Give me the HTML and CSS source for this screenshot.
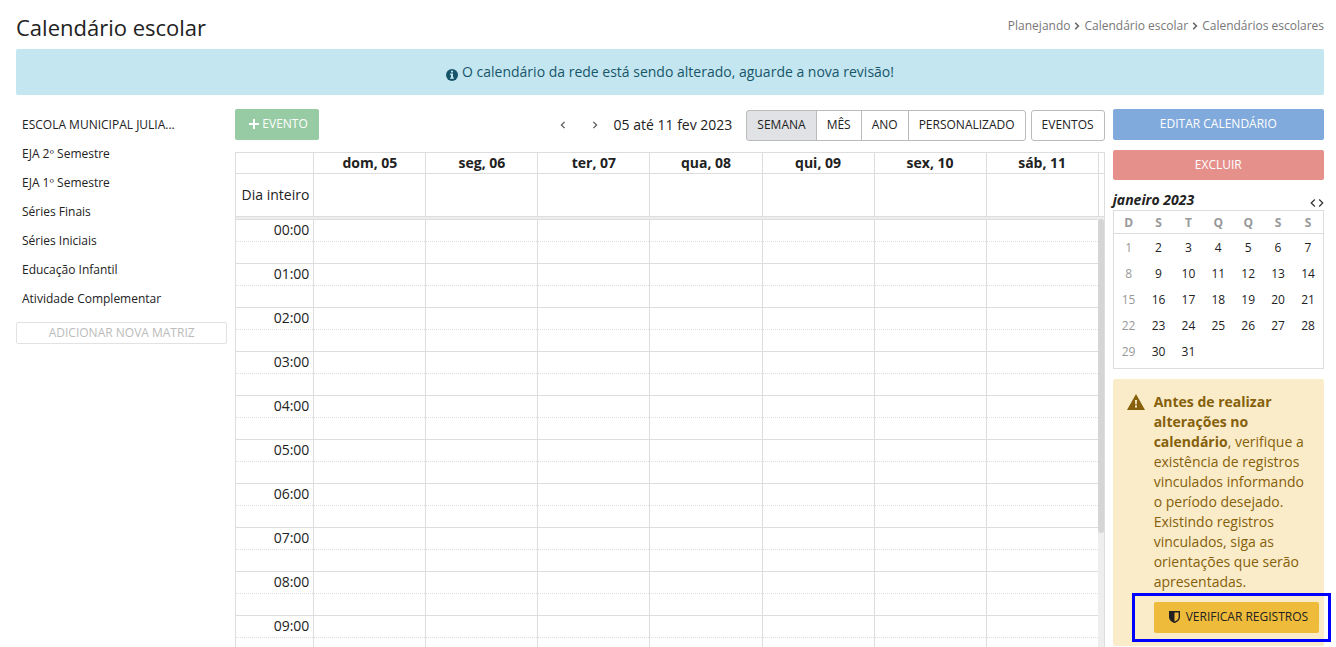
FILE: index.html
```html
<!DOCTYPE html>
<html lang="pt-BR">
<head>
<meta charset="utf-8">
<meta name="viewport" content="width=device-width, initial-scale=1">
<title>Calendário escolar</title>
<link rel="stylesheet" href="styles.css">
</head>
<body>
<div class="page">
  <header class="page-header">
    <h1 class="page-title">Calendário escolar</h1>
    <nav class="breadcrumb" aria-label="Navegação">
      <a href="#">Planejando</a>
      <svg class="crumb-sep" viewBox="0 0 6 8" aria-hidden="true"><path d="M1.2 .8 4.4 4 1.2 7.2"/></svg>
      <a href="#">Calendário escolar</a>
      <svg class="crumb-sep" viewBox="0 0 6 8" aria-hidden="true"><path d="M1.2 .8 4.4 4 1.2 7.2"/></svg>
      <a href="#">Calendários escolares</a>
    </nav>
  </header>

  <div class="notice" role="status">
    <svg class="notice-icon" viewBox="0 0 12 12" aria-hidden="true"><circle cx="6" cy="6" r="6" fill="#17566a"/><path d="M5 1.8h2v1.7H5zM4.2 4.6H7v3.8h.9v1.3H4.1V8.4H5V5.9h-.8z" fill="#c4e6f0"/></svg>
    <span>O calendário da rede está sendo alterado, aguarde a nova revisão!</span>
  </div>

  <main class="layout">
    <aside class="side">
      <ul class="school-list">
        <li><a href="#">ESCOLA MUNICIPAL JULIA...</a></li>
        <li><a href="#">EJA 2º Semestre</a></li>
        <li><a href="#">EJA 1º Semestre</a></li>
        <li><a href="#">Séries Finais</a></li>
        <li><a href="#">Séries Iniciais</a></li>
        <li><a href="#">Educação Infantil</a></li>
        <li><a href="#">Atividade Complementar</a></li>
      </ul>
      <button class="btn-add" type="button" disabled>ADICIONAR NOVA MATRIZ</button>
    </aside>

    <section class="schedule">
      <div class="toolbar">
        <button class="btn btn-green" type="button"><svg class="plus" viewBox="0 0 10 10" aria-hidden="true"><path d="M5 0v10M0 5h10"/></svg>EVENTO</button>
        <div class="period">
          <button class="arrow" type="button" aria-label="Anterior"><svg viewBox="0 0 6 8" aria-hidden="true"><path d="M4.6 .8 1.4 4l3.2 3.2"/></svg></button>
          <button class="arrow" type="button" aria-label="Próximo"><svg viewBox="0 0 6 8" aria-hidden="true"><path d="M1.4 .8 4.6 4 1.4 7.2"/></svg></button>
          <h2 class="period-title">05 até 11 fev 2023</h2>
        </div>
        <div class="views">
          <div class="view-group">
            <button class="view active" type="button">SEMANA</button>
            <button class="view" type="button">MÊS</button>
            <button class="view" type="button">ANO</button>
            <button class="view" type="button">PERSONALIZADO</button>
          </div>
          <button class="view single" type="button">EVENTOS</button>
        </div>
      </div>

      <div class="week">
        <table class="week-table">
          <colgroup><col class="col-axis"><col span="7"><col class="col-gutter"></colgroup>
          <thead>
            <tr><th></th><th>dom, 05</th><th>seg, 06</th><th>ter, 07</th><th>qua, 08</th><th>qui, 09</th><th>sex, 10</th><th>sáb, 11</th><th></th></tr>
          </thead>
          <tbody>
            <tr class="all-day"><td>Dia inteiro</td><td></td><td></td><td></td><td></td><td></td><td></td><td></td><td></td></tr>
          </tbody>
        </table>
        <div class="divider"></div>
        <div class="scroller">
          <table class="week-table slots">
            <colgroup><col class="col-axis"><col span="7"></colgroup>
            <tbody>
              <tr><td>00:00</td><td></td><td></td><td></td><td></td><td></td><td></td><td></td></tr>
              <tr class="half"><td></td><td></td><td></td><td></td><td></td><td></td><td></td><td></td></tr>
              <tr><td>01:00</td><td></td><td></td><td></td><td></td><td></td><td></td><td></td></tr>
              <tr class="half"><td></td><td></td><td></td><td></td><td></td><td></td><td></td><td></td></tr>
              <tr><td>02:00</td><td></td><td></td><td></td><td></td><td></td><td></td><td></td></tr>
              <tr class="half"><td></td><td></td><td></td><td></td><td></td><td></td><td></td><td></td></tr>
              <tr><td>03:00</td><td></td><td></td><td></td><td></td><td></td><td></td><td></td></tr>
              <tr class="half"><td></td><td></td><td></td><td></td><td></td><td></td><td></td><td></td></tr>
              <tr><td>04:00</td><td></td><td></td><td></td><td></td><td></td><td></td><td></td></tr>
              <tr class="half"><td></td><td></td><td></td><td></td><td></td><td></td><td></td><td></td></tr>
              <tr><td>05:00</td><td></td><td></td><td></td><td></td><td></td><td></td><td></td></tr>
              <tr class="half"><td></td><td></td><td></td><td></td><td></td><td></td><td></td><td></td></tr>
              <tr><td>06:00</td><td></td><td></td><td></td><td></td><td></td><td></td><td></td></tr>
              <tr class="half"><td></td><td></td><td></td><td></td><td></td><td></td><td></td><td></td></tr>
              <tr><td>07:00</td><td></td><td></td><td></td><td></td><td></td><td></td><td></td></tr>
              <tr class="half"><td></td><td></td><td></td><td></td><td></td><td></td><td></td><td></td></tr>
              <tr><td>08:00</td><td></td><td></td><td></td><td></td><td></td><td></td><td></td></tr>
              <tr class="half"><td></td><td></td><td></td><td></td><td></td><td></td><td></td><td></td></tr>
              <tr><td>09:00</td><td></td><td></td><td></td><td></td><td></td><td></td><td></td></tr>
              <tr class="half"><td></td><td></td><td></td><td></td><td></td><td></td><td></td><td></td></tr>
            </tbody>
          </table>
          <div class="track"><div class="thumb"></div></div>
        </div>
      </div>
    </section>

    <aside class="actions">
      <button class="btn btn-blue" type="button">EDITAR CALENDÁRIO</button>
      <button class="btn btn-red" type="button">EXCLUIR</button>

      <section class="mini">
        <div class="mini-head">
          <h3 class="mini-title">janeiro 2023</h3>
          <div class="mini-nav">
            <button class="arrow-mini" type="button" aria-label="Mês anterior"><svg viewBox="0 0 6 8" aria-hidden="true"><path d="M4.800 .5 1.200 4l3.600 3.500"/></svg></button>
            <button class="arrow-mini" type="button" aria-label="Próximo mês"><svg viewBox="0 0 6 8" aria-hidden="true"><path d="M1.200 .5 4.800 4 1.200 7.500"/></svg></button>
          </div>
        </div>
        <div class="mini-box">
          <table class="mini-table">
            <thead><tr><th>D</th><th>S</th><th>T</th><th>Q</th><th>Q</th><th>S</th><th>S</th></tr></thead>
            <tbody>
              <tr><td>1</td><td>2</td><td>3</td><td>4</td><td>5</td><td>6</td><td>7</td></tr>
              <tr><td>8</td><td>9</td><td>10</td><td>11</td><td>12</td><td>13</td><td>14</td></tr>
              <tr><td>15</td><td>16</td><td>17</td><td>18</td><td>19</td><td>20</td><td>21</td></tr>
              <tr><td>22</td><td>23</td><td>24</td><td>25</td><td>26</td><td>27</td><td>28</td></tr>
              <tr><td>29</td><td>30</td><td>31</td><td></td><td></td><td></td><td></td></tr>
            </tbody>
          </table>
        </div>
      </section>

      <section class="warning">
        <svg class="warning-icon" viewBox="0 0 18 16" aria-hidden="true"><path d="M9 0 18 16H0z" fill="#86600b"/><path d="M8 6h2l-.3 4.5H8.3zM8 11.5h2v2H8z" fill="#faecc9"/></svg>
        <div class="warning-body">
          <p><strong>Antes de realizar alterações no calendário</strong>, verifique a existência de registros vinculados informando o período desejado. Existindo registros vinculados, siga as orientações que serão apresentadas.</p>
          <div class="verify">
            <button class="btn btn-yellow" type="button"><svg class="shield" viewBox="0 0 11 12" aria-hidden="true"><path d="M.7.7h9.6v5.2c0 2.400-2.200 4.300-4.800 5.500C2.900 10.200.7 8.300.7 5.900z" fill="none" stroke="#222" stroke-width="1.400"/><path d="M.7.7h4.800v10.700C2.900 10.200.7 8.300.7 5.900z" fill="#222"/></svg>VERIFICAR REGISTROS</button>
            <span class="highlight"></span>
          </div>
        </div>
      </section>
    </aside>
  </main>
</div>
</body>
</html>
```
FILE: styles.css
```css
* { box-sizing: border-box; }

body {
  margin: 0;
  background: #fff;
  color: #222;
  font-family: "Open Sans", "Noto Sans", sans-serif;
  font-size: 14px;
  line-height: 20px;
}

h1, h2, h3, p, ul { margin: 0; padding: 0; }
a { color: inherit; text-decoration: none; }
button { font: inherit; color: inherit; cursor: pointer; }
table { border-spacing: 0; table-layout: fixed; width: 100%; }

.page {
  display: flex;
  flex-direction: column;
  height: 100vh;
  padding: 0 12px 0 16px;
  overflow: hidden;
}

.page-header {
  display: flex;
  flex: none;
  align-items: center;
  justify-content: space-between;
  height: 49px;
  padding-top: 4px;
}
.page-title { font-size: 22px; font-weight: 400; line-height: 30px; }
.breadcrumb { display: flex; align-items: center; gap: 4px; padding-bottom: 2px; font-size: 12px; color: #777; }
.crumb-sep { width: 6px; height: 8px; fill: none; stroke: #666; stroke-width: 1.6; }

.notice {
  display: flex;
  flex: none;
  align-items: center;
  justify-content: center;
  gap: 4px;
  height: 46px;
  border-radius: 2px;
  background: #c4e6f0;
  color: #17566a;
}
.notice-icon { width: 12px; height: 12px; margin-top: 5px; }

.layout {
  display: grid;
  flex: 1;
  grid-template-columns: repeat(12, minmax(0, 1fr));
  gap: 8px;
  min-height: 0;
  padding-top: 14px;
}
.side, .actions { grid-column: span 2; }
.schedule { display: flex; flex-direction: column; grid-column: span 8; min-height: 0; }

.school-list { padding: 1px 0 9px; list-style: none; font-size: 12px; }
.school-list a { display: block; padding: 0 6px; line-height: 29px; }
.btn-add {
  display: block;
  width: 100%;
  height: 22px;
  padding: 0;
  border: 1px solid #e2e2e5;
  border-radius: 2px;
  background: #fff;
  color: #bbb;
  font-size: 12px;
  line-height: 20px;
}

.btn {
  display: flex;
  align-items: center;
  justify-content: center;
  height: 31px;
  padding: 0 12px 2px;
  border: 0;
  border-radius: 2px;
  color: #fff;
  font-size: 12px;
  white-space: nowrap;
}
.btn-green { gap: 3px; padding: 0 11px 2px 14px; background: #97cba4; }
.btn-blue { width: 100%; background: #80aadc; }
.btn-red { width: 100%; height: 30px; margin-top: 10px; padding-bottom: 0; background: #e6908c; }
.btn-yellow { gap: 6px; padding: 0 11px 2px 15px; background: #efbb3b; color: #222; }
.plus { width: 10px; height: 10px; stroke: #fff; stroke-width: 2; }
.shield { width: 11px; height: 12px; }

.toolbar { display: flex; flex: none; align-items: flex-start; height: 43px; }
.period { display: flex; align-items: center; height: 31px; margin-left: auto; }
.arrow { display: flex; justify-content: center; width: 32px; padding: 0; border: 0; background: none; }
.arrow svg { width: 6px; height: 8px; fill: none; stroke: #555; stroke-width: 1.2; }
.period-title { padding: 0 14px 0 3px; font-size: 14px; font-weight: 400; }

.views { display: flex; gap: 5px; padding-top: 1px; }
.view-group { display: flex; }
.view {
  height: 31px;
  margin-left: -1px;
  padding: 0 10px 2px;
  border: 1px solid #bbb;
  background: #fff;
  font-size: 12px;
}
.view:first-child { margin-left: 0; border-radius: 3px 0 0 3px; }
.view:last-child { border-radius: 0 3px 3px 0; }
.view.active { background: #e1e2e6; }
.view.single { margin-left: 0; border-radius: 3px; }

.week {
  display: flex;
  flex: 1;
  flex-direction: column;
  min-height: 0;
  border: 1px solid #ddd;
  border-bottom: 0;
}
.col-axis { width: 77px; }
.col-gutter { width: 6px; }
.week-table th, .week-table td { padding: 0; border-left: 1px solid #ddd; }
.week-table th:first-child { border-left: 0; }
.week-table td:first-child { padding-right: 4px; border-left: 0; text-align: right; }
.week-table th { height: 20px; font-weight: 700; }
.all-day td { height: 43px; border-top: 1px solid #ddd; }
.divider { flex: none; height: 3px; border-top: 1px solid #ddd; background: #eee; }
.scroller { display: flex; flex: 1; min-height: 0; overflow: hidden; }
.slots { flex: 1; align-self: flex-start; }
.slots td { height: 22px; border-top: 1px solid #ddd; line-height: 20px; vertical-align: top; }
.slots .half td { border-top-style: dotted; }
.track { flex: none; width: 6px; background: #eee; }
.thumb { height: 314px; border-radius: 3px; background: #d5d5d5; }

.mini { padding-top: 10px; }
.mini-head { display: flex; align-items: center; justify-content: space-between; height: 20px; }
.mini-title { font-size: 14px; font-style: italic; font-weight: 700; line-height: 20px; }
.mini-nav { display: flex; gap: 2px; padding-top: 5px; }
.arrow-mini { display: flex; padding: 0; border: 0; background: none; }
.arrow-mini svg { width: 6px; height: 8px; fill: none; stroke: #333; stroke-width: 1.2; }
.mini-box { padding-bottom: 4px; border: 1px solid #ddd; }
.mini-table { font-size: 12px; text-align: center; }
.mini-table th { height: 23px; padding: 2px 0 0; border-bottom: 1px solid #ddd; color: #999; font-weight: 700; }
.mini-table td { height: 26px; padding: 2px 0 0; }
.mini-table td:first-child { color: #999; }

.warning {
  display: flex;
  gap: 9px;
  margin-top: 10px;
  padding: 13px 12px 13px 14px;
  border-radius: 2px;
  background: #faecc9;
  color: #86600b;
}
.warning-icon { flex: none; width: 18px; height: 16px; margin-top: 2px; }
.warning-body { flex: 1; min-width: 0; }
.verify { position: relative; width: max-content; margin-top: 10px; }
.highlight {
  position: absolute;
  inset: -9px -12px -9px -22px;
  border: 3px solid #00f;
  pointer-events: none;
}
```
